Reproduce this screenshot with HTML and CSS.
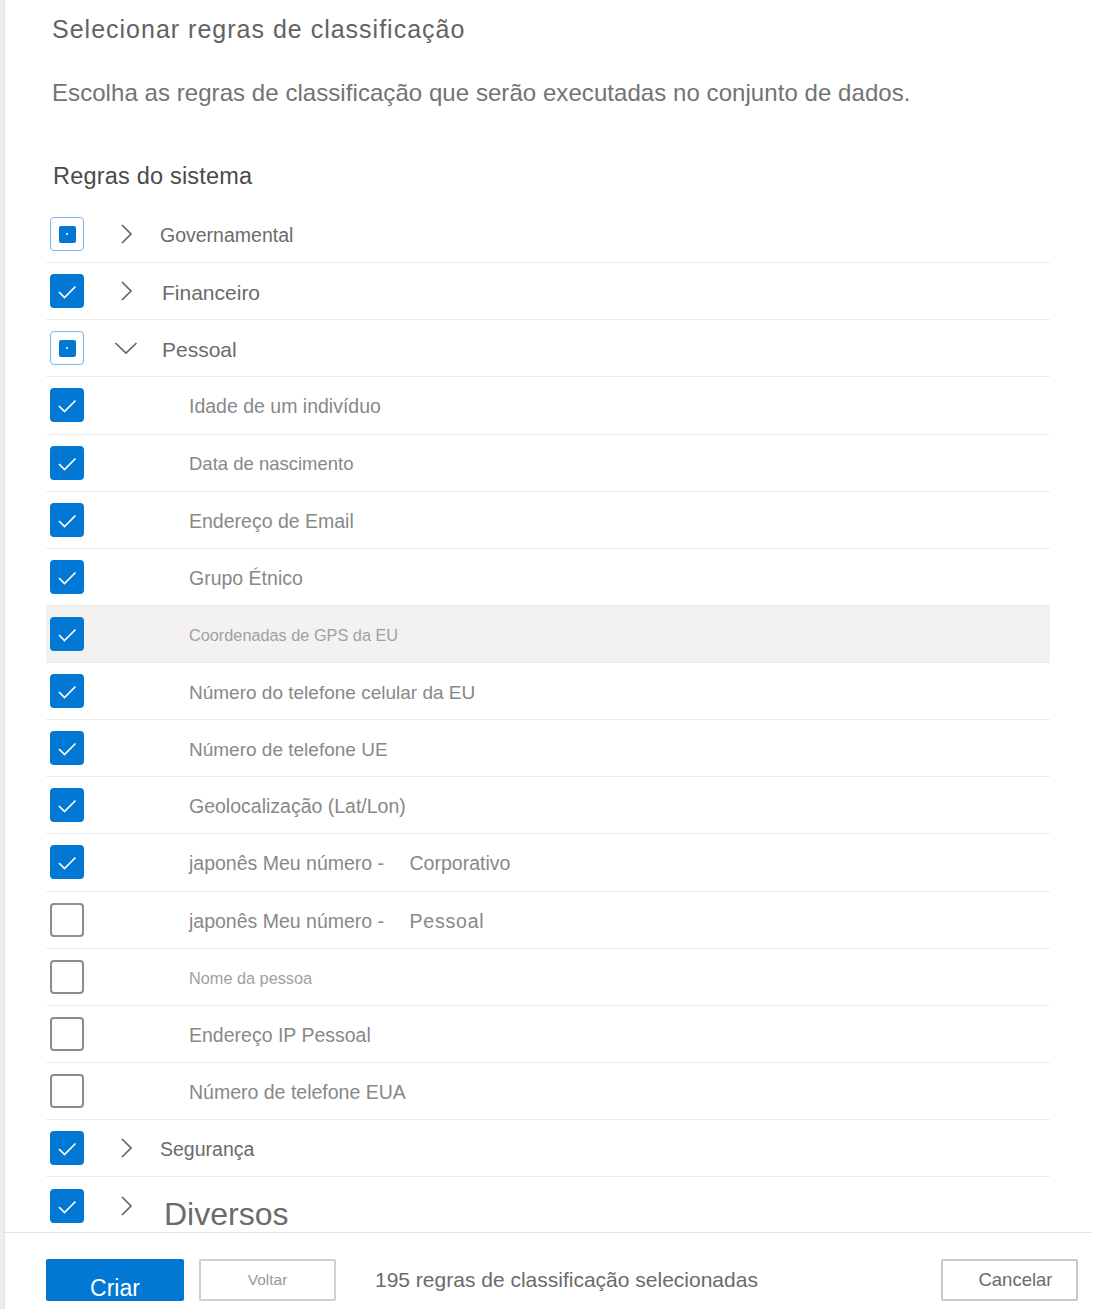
FILE: index.html
```html
<!DOCTYPE html>
<html lang="pt">
<head>
    <meta charset="UTF-8">
    <meta name="viewport" content="width=device-width, initial-scale=1.0">
    <title>Selecionar regras de classificação</title>
    <link rel="stylesheet" href="styles.css">
</head>
<body>
    <!-- page behind the panel, only a sliver shows -->
    <div class="rail"></div>

    <div class="panel">
        <div class="panel-body">
            <h1 class="title">Selecionar regras de classificação</h1>
            <p class="subtitle">Escolha as regras de classificação que serão executadas no conjunto de dados.</p>
            <h2 class="section">Regras do sistema</h2>

            <div class="rules">
                <div class="row">
                    <span class="check partial"><span class="dot"></span></span>
                    <span class="toggle"><svg viewBox="0 0 24 24"><polyline points="8,3 17,12 8,21"/></svg></span>
                    <span class="label">Governamental</span>
                </div>
                <div class="row">
                    <span class="check on"><svg viewBox="0 0 34 34"><polyline points="9,18 14.5,23.5 25.5,12.5"/></svg></span>
                    <span class="toggle"><svg viewBox="0 0 24 24"><polyline points="8,3 17,12 8,21"/></svg></span>
                    <span class="label big">Financeiro</span>
                </div>
                <div class="row">
                    <span class="check partial"><span class="dot"></span></span>
                    <span class="toggle"><svg viewBox="0 0 24 24"><polyline points="1.5,7 12,17 22.5,7"/></svg></span>
                    <span class="label big">Pessoal</span>
                </div>

                <div class="row child">
                    <span class="check on"><svg viewBox="0 0 34 34"><polyline points="9,18 14.5,23.5 25.5,12.5"/></svg></span>
                    <span class="label">Idade de um indivíduo</span>
                </div>
                <div class="row child">
                    <span class="check on"><svg viewBox="0 0 34 34"><polyline points="9,18 14.5,23.5 25.5,12.5"/></svg></span>
                    <span class="label mid">Data de nascimento</span>
                </div>
                <div class="row child">
                    <span class="check on"><svg viewBox="0 0 34 34"><polyline points="9,18 14.5,23.5 25.5,12.5"/></svg></span>
                    <span class="label">Endereço de Email</span>
                </div>
                <div class="row child">
                    <span class="check on"><svg viewBox="0 0 34 34"><polyline points="9,18 14.5,23.5 25.5,12.5"/></svg></span>
                    <span class="label">Grupo Étnico</span>
                </div>
                <div class="row child hover">
                    <span class="check on"><svg viewBox="0 0 34 34"><polyline points="9,18 14.5,23.5 25.5,12.5"/></svg></span>
                    <span class="label small">Coordenadas de GPS da EU</span>
                </div>
                <div class="row child">
                    <span class="check on"><svg viewBox="0 0 34 34"><polyline points="9,18 14.5,23.5 25.5,12.5"/></svg></span>
                    <span class="label narrow">Número do telefone celular da EU</span>
                </div>
                <div class="row child">
                    <span class="check on"><svg viewBox="0 0 34 34"><polyline points="9,18 14.5,23.5 25.5,12.5"/></svg></span>
                    <span class="label narrow">Número de telefone UE</span>
                </div>
                <div class="row child">
                    <span class="check on"><svg viewBox="0 0 34 34"><polyline points="9,18 14.5,23.5 25.5,12.5"/></svg></span>
                    <span class="label">Geolocalização (Lat/Lon)</span>
                </div>
                <div class="row child">
                    <span class="check on"><svg viewBox="0 0 34 34"><polyline points="9,18 14.5,23.5 25.5,12.5"/></svg></span>
                    <span class="label">japonês Meu número - <span class="suffix">Corporativo</span></span>
                </div>
                <div class="row child">
                    <span class="check"></span>
                    <span class="label">japonês Meu número - <span class="suffix wide">Pessoal</span></span>
                </div>
                <div class="row child">
                    <span class="check"></span>
                    <span class="label small">Nome da pessoa</span>
                </div>
                <div class="row child">
                    <span class="check"></span>
                    <span class="label">Endereço IP Pessoal</span>
                </div>
                <div class="row child">
                    <span class="check"></span>
                    <span class="label">Número de telefone EUA</span>
                </div>

                <div class="row">
                    <span class="check on"><svg viewBox="0 0 34 34"><polyline points="9,18 14.5,23.5 25.5,12.5"/></svg></span>
                    <span class="toggle"><svg viewBox="0 0 24 24"><polyline points="8,3 17,12 8,21"/></svg></span>
                    <span class="label">Segurança</span>
                </div>
                <div class="row">
                    <span class="check on"><svg viewBox="0 0 34 34"><polyline points="9,18 14.5,23.5 25.5,12.5"/></svg></span>
                    <span class="toggle"><svg viewBox="0 0 24 24"><polyline points="8,3 17,12 8,21"/></svg></span>
                    <span class="label huge">Diversos</span>
                </div>
            </div>
        </div>

        <div class="footer">
            <button class="btn primary">Criar</button>
            <button class="btn back">Voltar</button>
            <span class="status">195 regras de classificação selecionadas</span>
            <button class="btn cancel">Cancelar</button>
        </div>
    </div>
</body>
</html>
```

FILE: styles.css
```css
body {
    margin: 0;
    background-color: white;
    font-family: "Liberation Sans", Arial, sans-serif;
    display: flex;
    height: 1309px;
    overflow: hidden;
}
.rail {
    width: 4px;
    background-color: #eeeeee;
    border-right: 1px solid #e2e2e2;
}
.panel {
    width: 1087px;
    display: flex;
    flex-direction: column;
}
.panel-body {
    height: 1232px;
    overflow: hidden;
}

.title {
    margin: 14px 0 0 47px;
    font-size: 25px;
    line-height: 30px;
    font-weight: normal;
    letter-spacing: 1px;
    color: #636363;
}
.subtitle {
    margin: 35px 0 0 47px;
    font-size: 24px;
    line-height: 28px;
    letter-spacing: 0.06px;
    color: #737373;
}
.section {
    margin: 55px 0 0 48px;
    font-size: 23.5px;
    line-height: 28px;
    font-weight: normal;
    letter-spacing: 0.2px;
    color: #4a4a4a;
}

.rules {
    margin: 16px 0 0 41px;
    width: 1004px;
}
.row {
    height: 57.125px;
    box-sizing: border-box;
    border-bottom: 1px solid #ebebeb;
    display: flex;
    align-items: center;
    padding-left: 4px;
}
.row.hover {
    background-color: #f3f2f1;
}
.row:last-child {
    border-bottom: none;
}

/* checkboxes */
.check {
    width: 34px;
    height: 34px;
    box-sizing: border-box;
    border: 2px solid #8c8c8c;
    border-radius: 4px;
    flex-shrink: 0;
    display: flex;
    align-items: center;
    justify-content: center;
    background-color: white;
}
.check.on {
    background-color: #0078d4;
    border-color: #0078d4;
}
.check svg {
    width: 34px;
    height: 34px;
    margin: -2px;
}
.check polyline {
    fill: none;
    stroke: white;
    stroke-width: 1.7;
}
.check.partial {
    border: 1.5px solid #7fb6ec;
}
.check .dot {
    width: 17px;
    height: 17px;
    border-radius: 2px;
    background-color: #0078d4;
    position: relative;
}
.check .dot::after {
    content: "";
    position: absolute;
    left: 7.5px;
    top: 7.5px;
    width: 2px;
    height: 2px;
    background-color: #cfe4f7;
}

.toggle {
    width: 76px;
    flex-shrink: 0;
    display: flex;
}
.toggle svg {
    width: 24px;
    height: 24px;
    margin-left: 30px;
}
.toggle polyline {
    fill: none;
    stroke: #666666;
    stroke-width: 1.7;
}
.child .check {
    margin-right: 105px;
}

.label {
    font-size: 19.5px;
    padding-top: 3px;
    color: #888888;
    white-space: nowrap;
}
.row:not(.child) .label {
    color: #6b6b6b;
}
.label.narrow {
    font-size: 19px;
}
.label.big {
    font-size: 21px;
    margin-left: 2px;
}
.label.mid {
    font-size: 18.5px;
}
.label.small {
    font-size: 16.3px;
    color: #a0a0a0;
}
.label.huge {
    font-size: 32px;
    margin-left: 4px;
    padding-top: 18px;
    color: #777777;
}
.suffix {
    margin-left: 20px;
}
.suffix.wide {
    letter-spacing: 0.8px;
}

/* footer */
.footer {
    flex: 1;
    border-top: 1px solid #e1e1e1;
    display: flex;
    align-items: flex-start;
    padding: 26px 14px 0 41px;
}
.btn {
    height: 42px;
    box-sizing: border-box;
    font-family: "Liberation Sans", Arial, sans-serif;
    border-radius: 2px;
    background-color: white;
    cursor: pointer;
}
.btn.primary {
    width: 138px;
    background-color: #0078d4;
    border: none;
    color: white;
    font-size: 23px;
    padding-top: 16px;
    line-height: 26px;
}
.btn.back {
    width: 137px;
    margin-left: 15px;
    border: 2px solid #cfcfcf;
    color: #9a9a9a;
    font-size: 15.5px;
}
.btn.cancel {
    width: 137px;
    margin-left: auto;
    padding-left: 18px;
    border: 2px solid #c8c8c8;
    color: #6b6b6b;
    font-size: 18.5px;
}
.status {
    margin-left: 39px;
    font-size: 21px;
    line-height: 42px;
    color: #6b6b6b;
}
```
